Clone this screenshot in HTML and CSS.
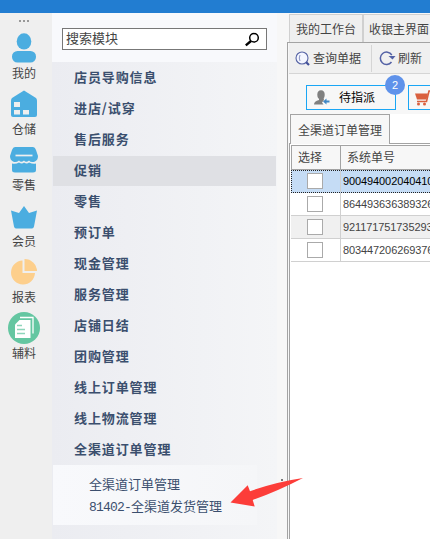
FILE: index.html
```html
<!DOCTYPE html>
<html lang="zh-CN">
<head>
<meta charset="utf-8">
<title>全渠道订单管理</title>
<link rel="stylesheet" href="styles.css">
</head>
<body>
<header class="titlebar"></header>
<div class="app">
  <nav class="rail">
    <div class="dots"><i></i><i></i><i></i></div>
    <div class="rail-item">
      <svg viewBox="0 0 34 34"><ellipse cx="17" cy="10.4" rx="7.3" ry="8.1" fill="#4bade0"/><rect x="5" y="20" width="24" height="11.5" rx="5.5" fill="#4bade0"/></svg>
      <span>我的</span>
    </div>
    <div class="rail-item">
      <svg viewBox="0 0 34 34"><path d="M17 3.500 29 11Q30 12 30 14V28Q30 30 28 30H6Q4 30 4 28V14Q4 12 5 11Z" fill="#4bade0"/><path d="M7 15h6v5H7zM7 23h6v4.500H7zM16 23h6v4.500h-6z" fill="#efefef"/></svg>
      <span>仓储</span>
    </div>
    <div class="rail-item">
      <svg viewBox="0 0 34 34"><path d="M8 4H26Q28 4 29 7L31 13Q31 17 28 18.500 24 20 22 17.500 19 20 17 17.500 14 20 12 17.500 9 20 6 18.500 3 17 3 13L5 7Q6 4 8 4Z" fill="#4bade0"/><path d="M5 20.500q4 .8 7-1 3 1.800 5 0 3 1.800 5 0 4 1.800 7 1V27Q29 29.500 26 29.500H8Q5 29.500 5 27Z" fill="#4bade0"/><path d="M8.500 12.500H25.500" stroke="#efefef" stroke-width="1.700"/></svg>
      <span>零售</span>
    </div>
    <div class="rail-item">
      <svg viewBox="0 0 34 34"><path d="M4 11.500 12 14 17 7 22 14 30 11.500 27 27.500Q26.500 29.500 25 29.500H9Q7.500 29.500 7 27.500Z" fill="#4bade0"/></svg>
      <span>会员</span>
    </div>
    <div class="rail-item">
      <svg viewBox="0 0 34 34"><path d="M15.500 5.500A12 12 0 1 0 28 18H15.500Z" fill="#fdcf8c"/><path d="M17.500 4A12.500 12.500 0 0 1 30 16H17.500Z" fill="#fdcf8c"/></svg>
      <span>报表</span>
    </div>
    <div class="rail-item">
      <svg viewBox="0 0 34 34"><circle cx="17" cy="17" r="16" fill="#64c6a1"/><path d="M13 6.500H26V22.500" fill="none" stroke="#fff" stroke-width="1.300"/><path d="M12.500 9H23.500V27H8V13.500Z" fill="#fff"/><path d="M10 14.500h5M10 18.500h8M10 22.500h8" stroke="#8ed5bb" stroke-width="1.400"/></svg>
      <span>辅料</span>
    </div>
  </nav>

  <aside class="menu">
    <div class="search-area">
      <div class="search"><span>搜索模块</span>
        <svg viewBox="0 0 16 16"><circle cx="10" cy="5.800" r="4.300" fill="none" stroke="#000" stroke-width="1.500"/><path d="M7 9 1.800 13.300" stroke="#000" stroke-width="2.400"/></svg>
      </div>
    </div>
    <ul class="modules">
      <li>店员导购信息</li>
      <li>进店/试穿</li>
      <li>售后服务</li>
      <li class="active">促销</li>
      <li>零售</li>
      <li>预订单</li>
      <li>现金管理</li>
      <li>服务管理</li>
      <li>店铺日结</li>
      <li>团购管理</li>
      <li>线上订单管理</li>
      <li>线上物流管理</li>
      <li>全渠道订单管理</li>
    </ul>
    <div class="submenu">
      <a>全渠道订单管理</a>
      <a><span class="code">81402-</span>全渠道发货管理</a>
    </div>
  </aside>

  <div class="splitter"><i></i><i></i></div>

  <main class="workspace">
    <div class="tabs"><div class="tab first">我的工作台</div><div class="tab">收银主界面</div></div>
    <div class="panel">
      <div class="toolbar">
        <div class="tool query">
          <svg viewBox="0 0 16 16" width="16" height="16"><circle cx="7" cy="7" r="6" fill="#f4f6ff" stroke="#5865a5" stroke-width="1.100"/><path d="M5 4Q3.500 7 5 10" fill="none" stroke="#8a94c4"/><path d="m11.200 11.200 2.800 2.800" stroke="#414f99" stroke-width="2.200"/></svg>
          <span>查询单据</span>
        </div>
        <div class="tool refresh">
          <svg viewBox="0 0 17 16" width="17" height="16"><path d="M12.800 5A6.200 6.200 0 1 0 12.500 12" fill="none" stroke="#5361a5" stroke-width="1.500"/><path d="M9.500 6H16.500L13.500 9.500Z" fill="#5361a5"/></svg>
          <span>刷新</span>
        </div>
      </div>
      <div class="filters">
        <div class="filter">
          <svg viewBox="0 0 16 16" width="16" height="16"><ellipse cx="7" cy="4.800" rx="3.700" ry="4.500" fill="#808080"/><path d="M5 8H9.500L10 10 8 12.500 9.500 14.500H0Q0 11 5 10Z" fill="#808080"/><path d="M9 11.500 12.500 8.500V10.500H15.500V12.500H12.500V14.500Z" fill="#3f87c5"/></svg>
          <span>待指派</span>
          <b class="badge">2</b>
        </div>
        <div class="filter cart">
          <svg viewBox="0 0 18 16" width="18" height="16"><path d="M17 1H14L11.500 11.500H2" fill="none" stroke="#d9603f" stroke-width="1.600"/><path d="M0 3.500H13L11.500 9.500H2Z" fill="#d9603f"/><circle cx="3.500" cy="14" r="1.500" fill="#d9603f"/><circle cx="9.500" cy="14" r="1.500" fill="#d9603f"/></svg>
        </div>
      </div>
      <div class="doc-tabs"><div class="doc-tab">全渠道订单管理</div></div>
      <div class="doc">
        <div class="grid">
          <div class="row head"><div class="cell">选择</div><div class="cell">系统单号</div></div>
          <div class="row selected"><div class="cell"><i class="check"></i></div><div class="cell">900494002040410</div></div>
          <div class="row"><div class="cell"><i class="check"></i></div><div class="cell">864493636389326</div></div>
          <div class="row alt"><div class="cell"><i class="check"></i></div><div class="cell">921171751735293</div></div>
          <div class="row"><div class="cell"><i class="check"></i></div><div class="cell">803447206269376</div></div>
        </div>
      </div>
    </div>
  </main>
</div>
<svg class="arrow" viewBox="0 0 74 30"><path d="M.5 24.500 17.700 7.300 20 13.200Q46 4 73 0 48 13 22.700 22L24.700 28.500Z" fill="#fc3d39"/></svg>
</body>
</html>
```
FILE: styles.css
```css
* { box-sizing: border-box; }
body {
  position: relative;
  margin: 0;
  width: 430px;
  height: 539px;
  overflow: hidden;
  background: #f7f7f7;
  color: #444;
  font: 12px/18px "Noto Sans CJK SC", sans-serif;
  white-space: nowrap;
}
svg { display: block; flex: none; }
.titlebar { height: 13px; background: #227dd1; }
.app { display: flex; height: 526px; }

.rail { width: 52px; flex: none; background: #efefef; padding-right: 4px; }
.dots { display: flex; justify-content: center; gap: 2px; height: 18px; padding-top: 7px; }
.dots i { width: 2px; height: 2px; background: #999; }
.rail-item { display: flex; flex-direction: column; align-items: center; height: 56px; }
.rail-item svg { width: 34px; height: 34px; }
.rail-item span { margin-top: -1px; }

.menu { width: 225px; flex: none; background: linear-gradient(90deg, #ebecf1, #f4f5f7); }
.search-area { height: 49px; padding: 15px 10px 0; background: #f8f9fc; }
.search {
  display: flex;
  justify-content: space-between;
  align-items: flex-start;
  width: 205px;
  height: 22px;
  padding: 0 6px 0 3px;
  border: 1px solid #777;
  background: #fff;
  font-size: 13px;
  line-height: 17px;
}
.search svg { width: 16px; height: 16px; margin-top: 3px; }
.modules { list-style: none; margin: 0; padding: 1px 1px 0; }
.modules li {
  height: 30px;
  margin-bottom: 1px;
  padding-left: 21px;
  color: #3b4f6e;
  font-size: 13px;
  font-weight: 700;
  line-height: 28px;
  letter-spacing: .9px;
}
.modules .active { background: #dfe0e4; }
.submenu {
  height: 60px;
  margin: -1px 20px 0 1px;
  padding: 8px 0 0 36px;
  background: linear-gradient(90deg, #f8f9fc, #f5f6f8);
  color: #3b4f6e;
  font-size: 13px;
}
.submenu a { display: block; height: 22px; line-height: 22px; }
.code { display: inline-block; width: 42px; font: 13px/20px "Liberation Mono", monospace; letter-spacing: -.8px; }

.splitter { width: 10px; flex: none; padding: 466px 0 0 4px; }
.splitter i { display: block; width: 2px; height: 2px; margin-bottom: 2px; background: #777; }

.workspace { width: 143px; flex: none; padding-top: 1px; overflow: hidden; }
.tabs { display: flex; height: 28px; margin-left: 2px; border-top: 1px solid #d0d0d0; background: #efefef; }
.tab { flex: 1; padding: 5px 0 0 5px; overflow: hidden; }
.tab.first { flex: none; width: 75px; padding-left: 6px; border: solid #d0d0d0; border-width: 0 2px 0 1px; }
.panel { height: 497px; border: solid #a3a3a3; border-width: 1px 0 0 1px; padding-left: 1px; }
.toolbar { display: flex; height: 31px; border-bottom: 1px solid #d5d5d5; background: #f0f0f0; }
.tool { display: flex; align-items: center; flex: none; }
.tool span { padding-bottom: 1px; }
.query { width: 83px; height: 27px; gap: 2px; margin-top: 2px; padding-left: 6px; border-right: 1px solid #d5d5d5; }
.refresh { gap: 2px; padding-left: 7px; }
.filters { display: flex; gap: 12px; height: 40px; padding: 11px 0 0 17px; }
.filter {
  position: relative;
  display: flex;
  align-items: center;
  width: 90px;
  height: 25px;
  flex: none;
  gap: 9px;
  padding-left: 7px;
  border: 1px solid #1aa6f5;
  color: #000;
}
.filter span { padding-bottom: 2px; }
.filter.cart { flex: 1; padding-left: 6px; border-right: 0; overflow: hidden; }
.badge {
  position: absolute;
  top: -11px;
  left: 78px;
  width: 20px;
  height: 20px;
  border-radius: 50%;
  background: #5f92ea;
  color: #fff;
  font: 11px/20px "Liberation Sans", sans-serif;
  text-align: center;
}
.doc-tabs { height: 30px; padding-left: 1px; background: #fff; border-bottom: 1px solid #a3a3a3; }
.doc-tab {
  width: 100px;
  height: 30px;
  padding: 6px 0 0 7px;
  border: 1px solid #a3a3a3;
  border-bottom: 0;
  background: #f7f7f7;
}
.doc { height: 396px; padding: 1px 0 0 1px; border-left: 1px solid #a3a3a3; background: #fff; }
.grid { border-top: 1px solid #a3a3a3; }
.row { display: flex; height: 23px; border-bottom: 1px solid #d0d0d0; font: 11px/22px "Liberation Sans", sans-serif; }
.cell { width: 50px; flex: none; border-right: 1px solid #d0d0d0; }
.cell + .cell { flex: 1; width: auto; min-width: 0; padding-left: 2px; border: 0; overflow: hidden; letter-spacing: -.1px; }
.head { height: 24px; background: #f7f7f7; border-color: #a3a3a3; font: 12px/22px "Noto Sans CJK SC", sans-serif; }
.head .cell { padding-left: 6px; border: solid #a3a3a3; border-width: 0 1px; }
.head .cell + .cell { padding-left: 6px; border: 0; letter-spacing: 0; }
.selected { background: #c5dcf5; border: 1px dotted #222; border-width: 1px 0 1px 1px; color: #000; line-height: 21px; }
.selected .cell { width: 49px; }
.alt { background: #f0f0f0; }
.check { display: block; width: 16px; height: 16px; margin: 3px 0 0 16px; border: 1px solid #aaa; background: #fff; }
.selected .check { margin: 2px 0 0 15px; }

.arrow { position: absolute; left: 230px; top: 478px; width: 74px; height: 30px; }
```
